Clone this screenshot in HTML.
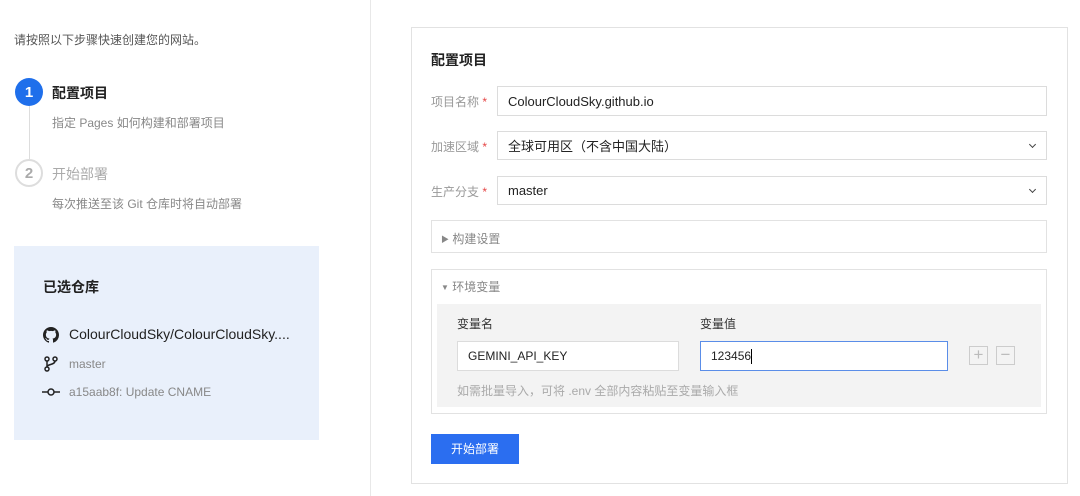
<!DOCTYPE html>
<html><head><meta charset="utf-8"><style>
*{box-sizing:border-box;margin:0;padding:0}
body{width:1080px;height:496px;background:#fff;font-family:"Liberation Sans","Noto Sans CJK SC",sans-serif;position:relative;overflow:hidden;color:#222}
.a{position:absolute}
.t12{font-size:12px}
.inp{position:absolute;border:1px solid #dcdcdc;background:#fff;font-size:13px;color:#222;padding-left:10px;display:flex;align-items:center}
.lab{position:absolute;font-size:12px;color:#999}
.lab b{color:#e54545;font-weight:normal}
.chev{position:absolute;right:11px;top:50%;margin-top:-4px;width:5px;height:5px;border-right:1.2px solid #444;border-bottom:1.2px solid #444;transform:rotate(45deg)}
.circ{display:flex;align-items:center;justify-content:center;border-radius:50%;font-size:15px;font-weight:bold}
</style></head><body>
<div class="a" style="left:370px;top:0;width:1px;height:496px;background:#e8e8e8"></div>
<div class="a t12" style="left:14px;top:31px;color:#555">请按照以下步骤快速创建您的网站。</div>
<div class="a circ" style="left:15px;top:78px;width:28px;height:28px;background:#1f6feb;color:#fff">1</div>
<div class="a" style="left:29px;top:106px;width:1px;height:53px;background:#ddd"></div>
<div class="a" style="left:52px;top:83px;font-size:14px;font-weight:bold;color:#222">配置项目</div>
<div class="a t12" style="left:52px;top:114px;color:#888">指定 Pages 如何构建和部署项目</div>
<div class="a circ" style="left:15px;top:159px;width:28px;height:28px;border:2px solid #ddd;color:#aaa">2</div>
<div class="a" style="left:52px;top:164px;font-size:14px;color:#aaa">开始部署</div>
<div class="a t12" style="left:52px;top:195px;color:#888">每次推送至该 Git 仓库时将自动部署</div>
<div class="a" style="left:14px;top:246px;width:305px;height:194px;background:#e9f0fb"></div>
<div class="a" style="left:43px;top:277px;font-size:14px;font-weight:bold">已选仓库</div>
<svg class="a" style="left:43px;top:327px" width="16" height="16" viewBox="0 0 16 16"><path fill="#222" d="M8 0C3.58 0 0 3.580 0 8c0 3.54 2.29 6.53 5.47 7.590.4.07.55-.17.55-.38v-1.33c-2.23.48-2.7-1.070-2.7-1.070-.36-.92-.89-1.170-.89-1.170-.73-.5.05-.49.05-.49.8.06 1.23.83 1.23.83.71 1.22 1.87.87 2.33.66.07-.52.28-.87.5-1.070-1.780-.2-3.640-.89-3.640-3.950 0-.87.31-1.590.83-2.150-.08-.2-.36-1.020.08-2.120 0 0 .67-.21 2.2.82a7.6 7.6 0 0 1 4 0c1.53-1.040 2.2-.82 2.2-.82.44 1.1.16 1.92.08 2.12.51.56.82 1.27.82 2.15 0 3.07-1.870 3.75-3.650 3.95.29.25.54.73.54 1.48v2.2c0 .21.15.46.55.38A8 8 0 0 0 16 8c0-4.420-3.580-8-8-8z"/></svg>
<div class="a" style="left:69px;top:326px;font-size:14px;color:#222">ColourCloudSky/ColourCloudSky....</div>
<svg class="a" style="left:43px;top:356px" width="16" height="16" viewBox="0 0 16 16" fill="none" stroke="#222" stroke-width="1.5"><circle cx="4" cy="3" r="2"/><circle cx="4" cy="13" r="2"/><circle cx="12" cy="3" r="2"/><path d="M4 5v6M12 5c0 4-8 3-8 6"/></svg>
<div class="a t12" style="left:69px;top:357px;color:#888">master</div>
<svg class="a" style="left:42px;top:386px" width="18" height="12" viewBox="0 0 18 12" fill="none" stroke="#222" stroke-width="1.5"><circle cx="9" cy="6" r="3"/><path d="M0 6h6M12 6h6"/></svg>
<div class="a t12" style="left:69px;top:385px;color:#888">a15aab8f: Update CNAME</div>

<div class="a" style="left:411px;top:27px;width:657px;height:457px;border:1px solid #e2e2e2"></div>
<div class="a" style="left:431px;top:50px;font-size:14px;font-weight:bold">配置项目</div>
<div class="lab" style="left:431px;top:93px">项目名称 <b>*</b></div>
<div class="inp" style="left:497px;top:86px;width:550px;height:30px">ColourCloudSky.github.io</div>
<div class="lab" style="left:431px;top:138px">加速区域 <b>*</b></div>
<div class="inp" style="left:497px;top:131px;width:550px;height:29px">全球可用区（不含中国大陆）<span class="chev"></span></div>
<div class="lab" style="left:431px;top:183px">生产分支 <b>*</b></div>
<div class="inp" style="left:497px;top:176px;width:550px;height:29px">master<span class="chev"></span></div>
<div class="a" style="left:431px;top:220px;width:616px;height:33px;border:1px solid #e2e2e2"></div>
<div class="a t12" style="left:441px;top:230px;color:#888"><span style="font-size:8px;vertical-align:1px">▶</span> 构建设置</div>
<div class="a" style="left:431px;top:269px;width:616px;height:145px;border:1px solid #e2e2e2"></div>
<div class="a t12" style="left:441px;top:278px;color:#888"><span style="font-size:8px;vertical-align:1px">▼</span> 环境变量</div>
<div class="a" style="left:437px;top:304px;width:604px;height:103px;background:#f3f3f3"></div>
<div class="a" style="left:457px;top:315px;font-size:12px;color:#333">变量名</div>
<div class="a" style="left:700px;top:315px;font-size:12px;color:#333">变量值</div>
<div class="inp" style="left:457px;top:341px;width:222px;height:30px;font-size:12px">GEMINI_API_KEY</div>
<div class="inp" style="left:700px;top:341px;width:248px;height:30px;border-color:#5a8de8;font-size:12px">123456<span style="display:inline-block;width:1px;height:15px;background:#000"></span></div>
<div class="a" style="left:969px;top:346px;width:19px;height:19px;border:1px solid #ccc;color:#bbb;text-align:center;line-height:16px;font-size:17px">+</div>
<div class="a" style="left:996px;top:346px;width:19px;height:19px;border:1px solid #ccc;color:#bbb;text-align:center;line-height:16px;font-size:17px">−</div>
<div class="a t12" style="left:457px;top:382px;color:#aaa">如需批量导入，可将 .env 全部内容粘贴至变量输入框</div>
<div class="a" style="left:431px;top:434px;width:88px;height:30px;background:#2b6ef0;color:#fff;font-size:12px;text-align:center;line-height:30px">开始部署</div>
</body></html>
